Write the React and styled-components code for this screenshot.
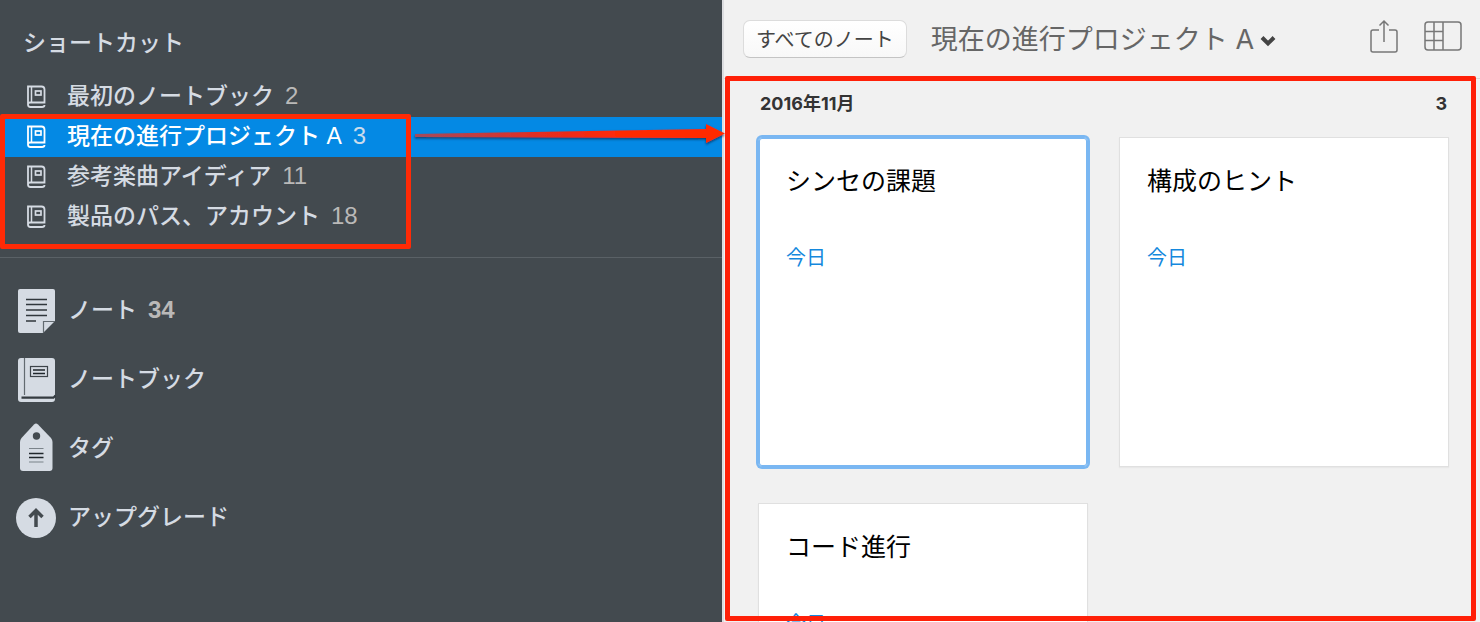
import React from 'react';

import styled, { createGlobalStyle } from "styled-components";

const GlobalStyle = createGlobalStyle`
  * {
    box-sizing: border-box;
  }

  body {
    margin: 0;
    font-family: "Liberation Sans", "Noto Sans CJK JP", sans-serif;
  }

  h1, h2, h3, p, ul {
    margin: 0;
    padding: 0;
    font-weight: 400;
  }
`;

const Page = styled.div`
  display: flex;
  height: 100vh;
  overflow: hidden;
`;

const Sidebar = styled.aside`
  position: relative;
  flex: 722 1 0;
  min-width: 0;
  background-color: #434a4f;
  color: #d5dbe3;
`;

const SidebarTitle = styled.h2`
  padding: 25px 23px 15px;
  font-size: 23px;
  line-height: 37px;
  font-weight: 500;
`;

const Shortcuts = styled.ul`
  position: relative;
  list-style: none;
  padding-bottom: 20px;
  border-bottom: 1px solid #5a6166;
`;

const ShortcutLink = styled.a`
  display: flex;
  align-items: center;
  gap: 21px;
  height: 40px;
  padding-left: 26px;
  font-size: 23px;
  font-weight: 500;
  line-height: 36px;
  white-space: nowrap;
  text-decoration: none;
  color: ${props => props.$active ? '#fff' : '#d5dbe3'};
  background-color: ${props => props.$active ? '#0489e4' : 'transparent'};
`;

const ShortcutName = styled.span`
  padding-bottom: 2px;
`;

const Count = styled.span`
  margin-left: 11px;
  font-size: 24px;
  color: ${props => props.$active ? '#cbdcec' : '#bab9b8'};
`;

const Sections = styled.ul`
  list-style: none;
  padding-top: 18px;
`;

const SectionLink = styled.a`
  display: flex;
  align-items: center;
  gap: 12px;
  height: 69px;
  padding-left: 16px;
  font-size: 23px;
  font-weight: 500;
  text-decoration: none;
  color: #d5dbe3;

  ${Count} {
    font-weight: 700;
  }
`;

const SectionName = styled.span`
  padding-bottom: 6px;
`;

const Main = styled.main`
  position: relative;
  display: flex;
  flex-direction: column;
  flex: 756 1 0;
  min-width: 0;
  background-color: #f1f1f1;
  border-left: 2px solid #dcdde0;
`;

const Toolbar = styled.header`
  display: flex;
  align-items: center;
  flex: none;
  height: 79px;
  padding: 0 18px 0 19px;
  border-bottom: 1px solid #d9d9d9;
`;

const AllNotesButton = styled.button`
  height: 38px;
  padding: 2px 12px 0;
  font-family: inherit;
  font-size: 20px;
  line-height: 34px;
  white-space: nowrap;
  color: #444;
  background: linear-gradient(#fff, #f8f8f8);
  border: 1px solid #dcdcdc;
  border-bottom-color: #c4c4c4;
  border-radius: 7px;
`;

const NotebookButton = styled.button`
  display: flex;
  align-items: center;
  gap: 6px;
  margin: 0 auto 0 24px;
  padding: 0;
  font-family: Inter, "Noto Sans CJK JP", sans-serif;
  font-size: 27px;
  white-space: nowrap;
  color: #666;
  background: none;
  border: none;
`;

const NotebookName = styled.span`
  padding-bottom: 4px;
`;

const IconButton = styled.button`
  display: flex;
  margin-left: 26px;
  padding: 0 0 6px;
  background: none;
  border: none;
`;

const Notes = styled.section`
  flex: 1;
  min-height: 0;
  padding: 13px 31px 0 34px;
  overflow: hidden;
`;

const MonthRow = styled.div`
  display: flex;
  justify-content: space-between;
  padding: 0 2px;
  margin-bottom: 21px;
  font-family: Inter, "Noto Sans CJK JP", sans-serif;
  font-size: 18px;
  line-height: 24px;
  color: #333;
`;

const Month = styled.h3`
  font-size: 18px;
  font-weight: 700;
`;

const MonthCount = styled.span`
  font-weight: 700;
`;

const Cards = styled.div`
  display: grid;
  grid-template-columns: 1fr 1fr;
  gap: 36px 31px;
`;

const Card = styled.article`
  aspect-ratio: 1;
  padding: 24px 27px;
  background-color: #fff;
  border: 1px solid ${props => props.$selected ? '#7ab7f2' : '#e0e0e0'};
  border-radius: ${props => props.$selected ? '4px' : '0'};
  box-shadow: ${props => props.$selected
    ? '0 0 0 2px #7ab7f2, inset 0 0 0 1px #7ab7f2'
    : '0 1px 1px #e8e8e8'};
`;

const CardTitle = styled.h3`
  font-size: 25px;
  line-height: 38px;
  color: #000;
`;

const CardDate = styled.p`
  margin-top: 43px;
  font-size: 20px;
  line-height: 30px;
  color: #1488dd;
`;

// red markers drawn over the two panes
const ShortcutMarker = styled.div`
  position: absolute;
  top: 37px;
  left: 0;
  width: 411px;
  height: 135px;
  border: 5px solid #ff2a06;
  border-radius: 2px;
  pointer-events: none;
`;

const NotesMarker = styled.div`
  position: absolute;
  top: 76px;
  left: 1px;
  right: 4px;
  bottom: 1px;
  border: 5px solid #ff2008;
  border-radius: 2px;
  pointer-events: none;
`;

const Arrow = styled.svg`
  position: absolute;
  z-index: 1;
  top: 43px;
  left: 413px;
  width: calc(100% - 410px);
  height: 32px;
  pointer-events: none;
`;

const shortcuts = [
  { name: '最初のノートブック', count: 2 },
  { name: '現在の進行プロジェクト A', count: 3, active: true },
  { name: '参考楽曲アイディア', count: 11 },
  { name: '製品のパス、アカウント', count: 18 },
];

const notes = [
  { title: 'シンセの課題', date: '今日', selected: true },
  { title: '構成のヒント', date: '今日' },
  { title: 'コード進行', date: '今日' },
];

const SmallBook = ({ active }) => (
  <svg width="20" height="24" viewBox="0 0 20 24" fill="none" stroke={active ? '#fff' : '#d5dbe3'} strokeWidth="1.8">
    <path d="M2 20V1.5H15.5Q18.5 1.5 18.5 4.5V17.5H4Q2 17.5 2 19.5Q2 22 4.5 22H16Q18.5 22 18.5 20" />
    <path d="M5.5 1.5V17.5" strokeWidth="1.5" />
    <rect x="9.5" y="6" width="5.5" height="4" strokeWidth="1.7" />
  </svg>
);

const NoteIcon = () => (
  <svg width="40" height="44" viewBox="0 0 40 44">
    <path d="M4 0H37Q39 0 39 2V32L27 44H4Q2 44 2 42V2Q2 0 4 0Z" fill="#d5dbe3" />
    <path d="M27.5 44V32.5H39" fill="none" stroke="#626a70" strokeWidth="1.2" />
    <path d="M10 10.5H31M10 15.5H31M10 21H31M10 26.5H31M10 32H20" stroke="#30373c" strokeWidth="1.6" />
  </svg>
);

const NotebookIcon = () => (
  <svg width="40" height="44" viewBox="0 0 40 44">
    <path d="M5 0H36Q39 0 39 3V41Q39 44 36 44H5Q2 44 2 41V3Q2 0 5 0Z" fill="#d5dbe3" />
    <path d="M8.5 0V37" stroke="#626a70" strokeWidth="1.2" />
    <path d="M39.5 37.5L37.5 39.7H5.5" fill="none" stroke="#343b40" strokeWidth="2.2" />
    <rect x="14.5" y="8.5" width="17" height="10" fill="none" stroke="#3d444a" strokeWidth="1.2" />
    <path d="M17 12H29M17 15.5H29" stroke="#20272c" strokeWidth="1.5" />
  </svg>
);

const TagIcon = () => (
  <svg width="40" height="51" viewBox="0 0 40 51">
    <path d="M18 1.5Q20 -.5 22 1.5L35 15Q36.5 17 36.5 19V45Q36.5 48 33.5 48H7Q4 48 4 45V19Q4 17 5.5 15Z" fill="#d5dbe3" />
    <circle cx="20.5" cy="13" r="3.7" fill="#434a4f" />
    <path d="M13 30.5H27.5M13 34.5H27.5" stroke="#20272c" strokeWidth="1.5" />
    <path d="M13 25.5H27.5M13 39H27.5" stroke="#7b838a" strokeWidth="1.2" />
  </svg>
);

const UpgradeIcon = () => (
  <svg width="40" height="40" viewBox="0 0 40 40">
    <circle cx="20" cy="20" r="20" fill="#d5dbe3" />
    <path d="M20 29V13M13.5 19L20 12.5L26.5 19" fill="none" stroke="#434a4f" strokeWidth="3.5" />
  </svg>
);

const sections = [
  { name: 'ノート', count: 34, Icon: NoteIcon },
  { name: 'ノートブック', Icon: NotebookIcon },
  { name: 'タグ', Icon: TagIcon },
  { name: 'アップグレード', Icon: UpgradeIcon },
];

function App() {
  return (
    <Page>
      <GlobalStyle />
      <Sidebar>
        <SidebarTitle>ショートカット</SidebarTitle>
        <Shortcuts>
          {shortcuts.map(({ name, count, active }) => (
            <li key={name}>
              <ShortcutLink href="#" $active={active}>
                <SmallBook active={active} />
                <ShortcutName>{name}<Count $active={active}>{count}</Count></ShortcutName>
              </ShortcutLink>
            </li>
          ))}
          <ShortcutMarker />
          <Arrow viewBox="0 0 312 32" preserveAspectRatio="none">
            <defs>
              <linearGradient id="shaft">
                <stop offset="0" stopColor="#a34a5c" />
                <stop offset=".4" stopColor="#e32d22" />
                <stop offset=".65" stopColor="#ff2a06" />
              </linearGradient>
              <filter id="shade" x="-5%" y="-20%" width="110%" height="150%">
                <feDropShadow dx="0" dy="1.5" stdDeviation="1" floodColor="#102a50" floodOpacity=".8" />
              </filter>
            </defs>
            <path d="M2 14L293 9V4L312 13.5L293 23V18L2 17Z" fill="url(#shaft)" filter="url(#shade)" />
          </Arrow>
        </Shortcuts>
        <Sections>
          {sections.map(({ name, count, Icon }) => (
            <li key={name}>
              <SectionLink href="#">
                <Icon />
                <SectionName>{name}{count && <Count>{count}</Count>}</SectionName>
              </SectionLink>
            </li>
          ))}
        </Sections>
      </Sidebar>

      <Main>
        <Toolbar>
          <AllNotesButton type="button">すべてのノート</AllNotesButton>
          <NotebookButton type="button">
            <NotebookName>現在の進行プロジェクト A</NotebookName>
            <svg width="16" height="16" viewBox="0 0 16 16" fill="none" stroke="#444" strokeWidth="4">
              <path d="M2 6.5L8 12.5L14 6.5" />
            </svg>
          </NotebookButton>
          <IconButton type="button" aria-label="共有">
            <svg width="28" height="34" viewBox="0 0 28 34" fill="none" stroke="#777" strokeWidth="1.5">
              <path d="M9 11H3Q1 11 1 13V31Q1 33 3 33H25Q27 33 27 31V13Q27 11 25 11H19" />
              <path d="M14 23V2M9.5 6.5L14 2L18.5 6.5" />
            </svg>
          </IconButton>
          <IconButton type="button" aria-label="表示">
            <svg width="38" height="30" viewBox="0 0 38 30" fill="none" stroke="#777" strokeWidth="1.5">
              <rect x="1" y="1" width="36" height="28" rx="3" />
              <path d="M10 1V29M19 1V29M1 10.5H19M1 19.5H19" />
            </svg>
          </IconButton>
        </Toolbar>
        <Notes>
          <MonthRow>
            <Month>2016年11月</Month>
            <MonthCount>3</MonthCount>
          </MonthRow>
          <Cards>
            {notes.map(({ title, date, selected }) => (
              <Card key={title} $selected={selected}>
                <CardTitle>{title}</CardTitle>
                <CardDate>{date}</CardDate>
              </Card>
            ))}
          </Cards>
        </Notes>
        <NotesMarker />
      </Main>
    </Page>
  );
}

export default App;
